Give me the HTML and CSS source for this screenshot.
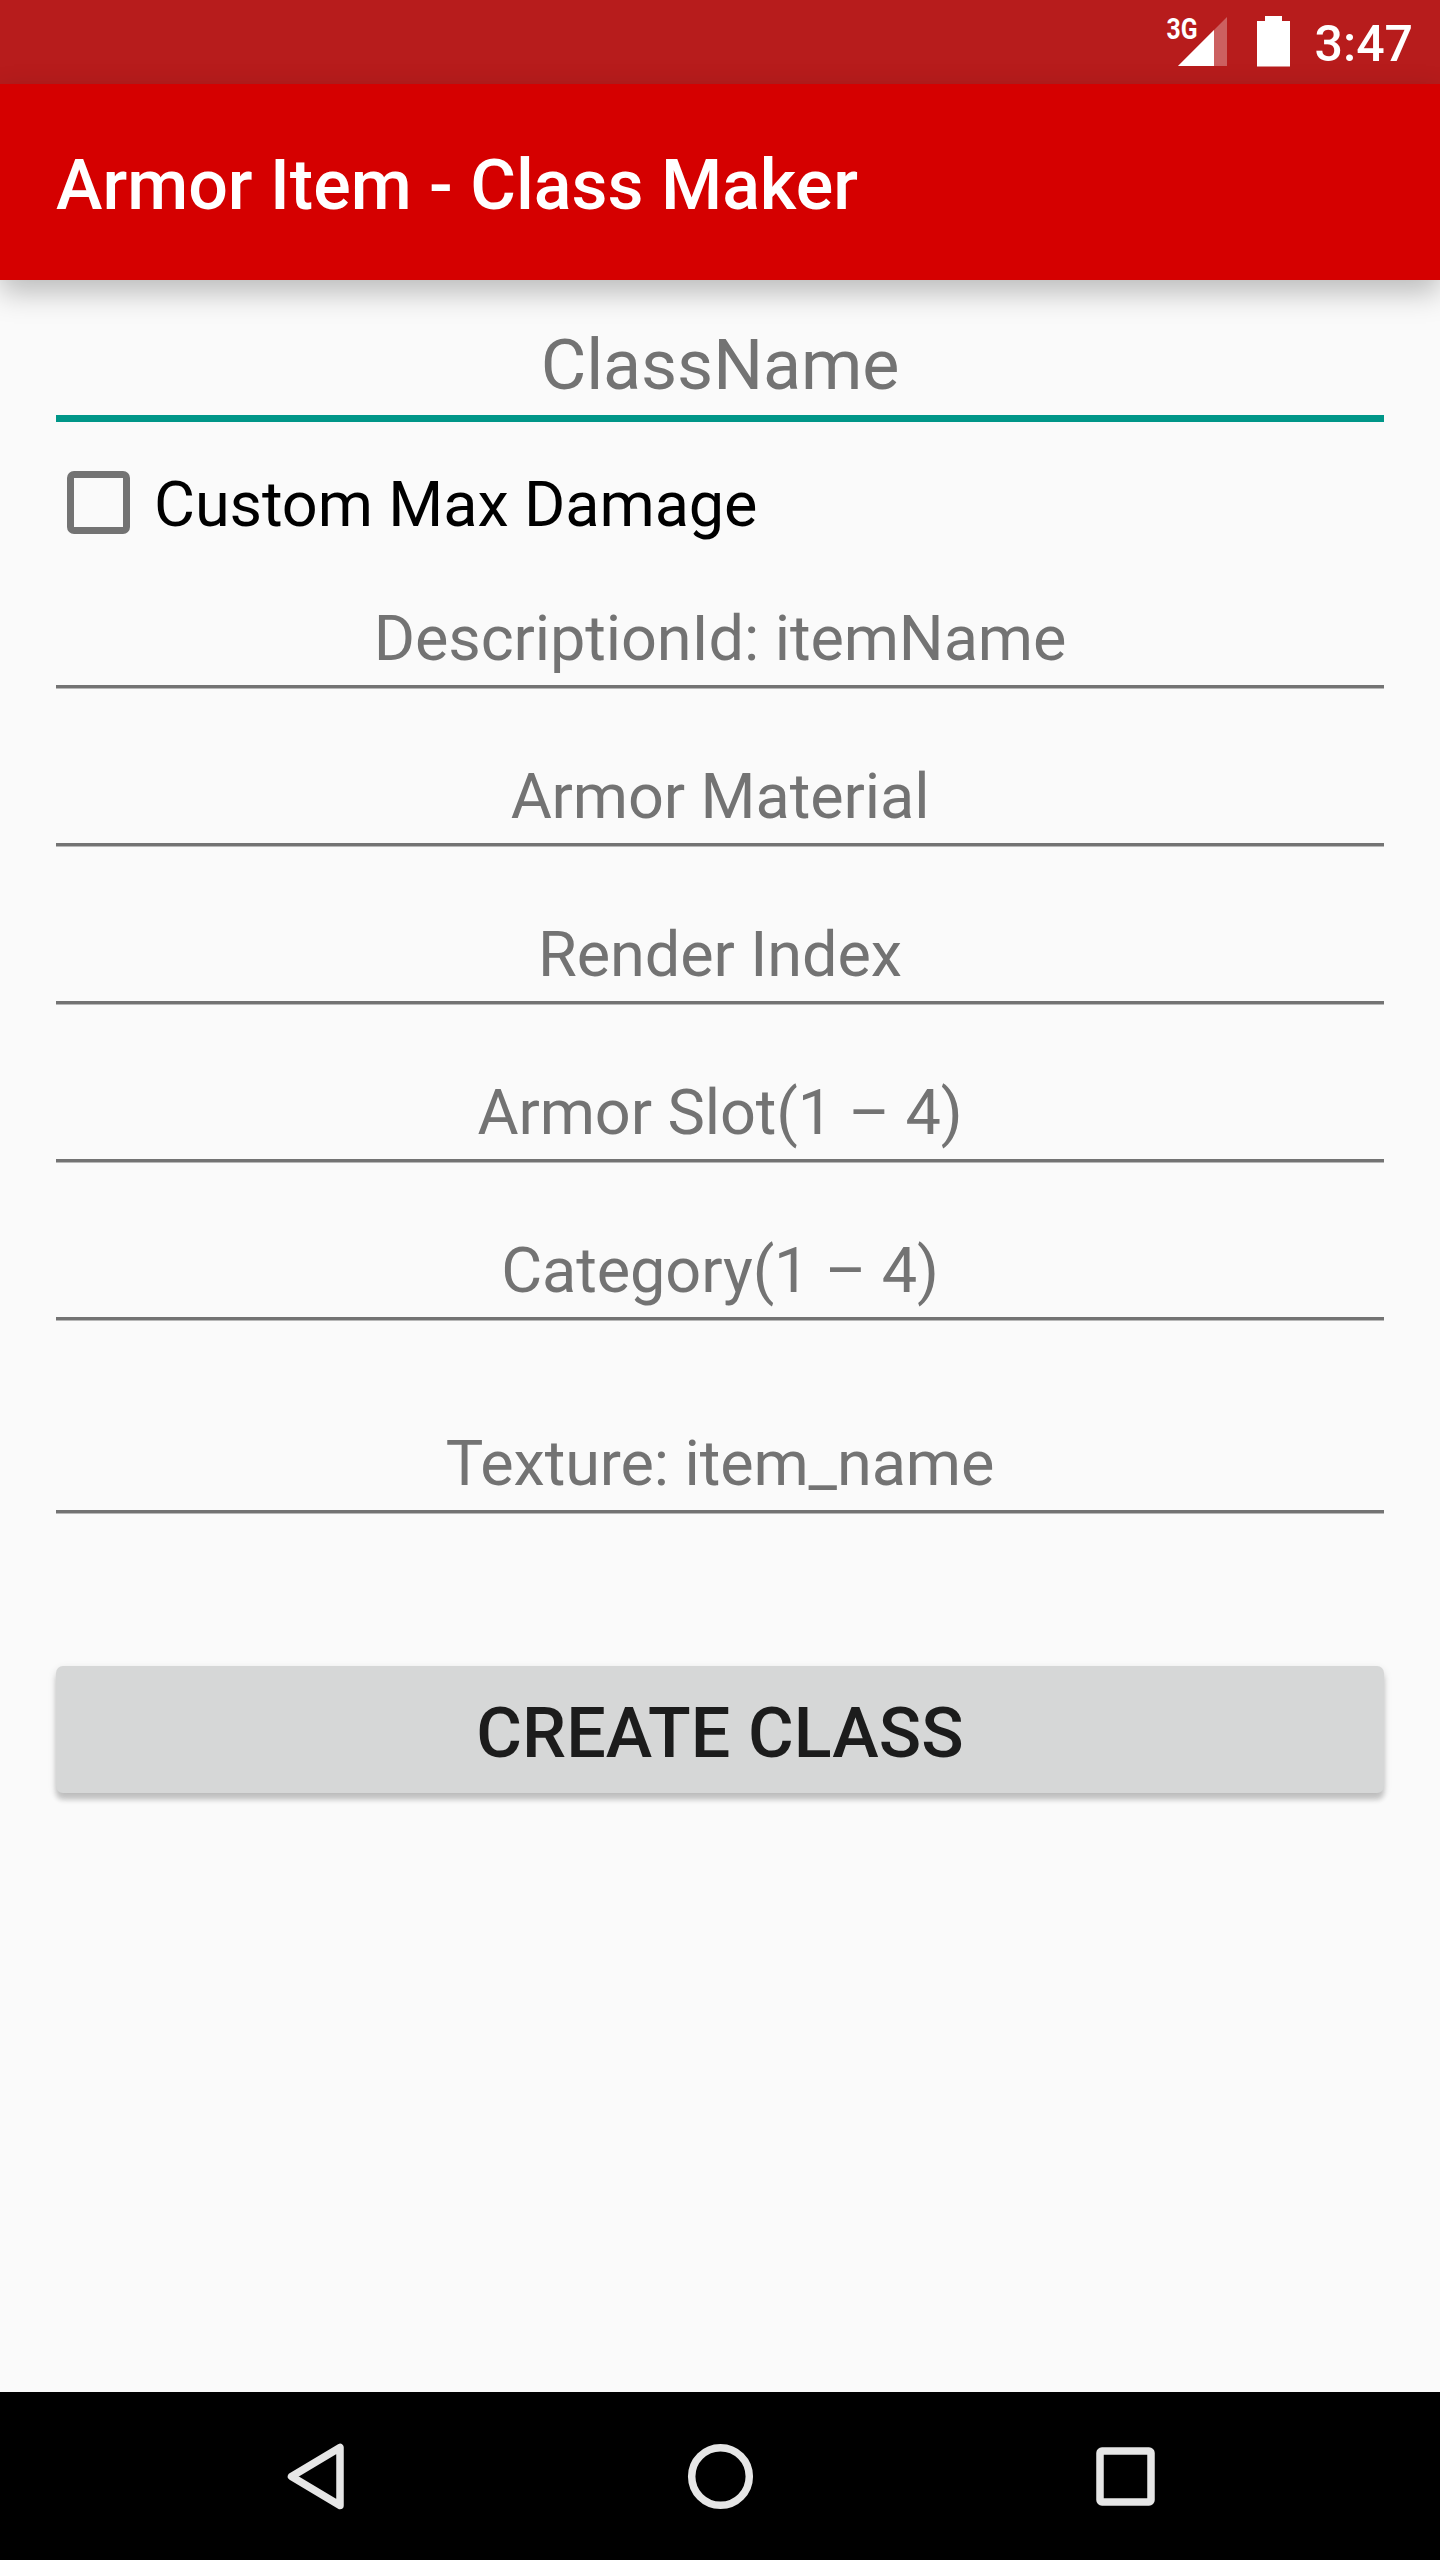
FILE: index.html
```html
<!DOCTYPE html>
<html lang="en">
<head>
    <meta charset="UTF-8">
    <meta name="viewport" content="width=device-width, initial-scale=1.0">
    <title>Armor Item - Class Maker</title>
    <link rel="stylesheet" href="styles.css">
</head>
<body>
    <div class="status-bar">
        <svg class="signal" width="62" height="84" viewBox="0 0 62 84">
            <text class="network" x="0.5" y="39" textLength="31" lengthAdjust="spacingAndGlyphs">3G</text>
            <path d="M12 66 L61 17 V66 Z" fill="#fff" fill-opacity="0.3"/>
            <path d="M12 66 L48 30 V66 Z" fill="#fff"/>
        </svg>
        <svg class="battery" width="33" height="84" viewBox="0 0 33 84">
            <path d="M8 16 H25 V21 H33 V66.5 H0 V21 H8 Z" fill="#fff"/>
        </svg>
        <span class="clock">3:47</span>
    </div>
    <header>
        <h1>Armor Item - Class Maker</h1>
    </header>
    <main>
        <form id="armorForm">
            <input type="text" class="field active" id="className" placeholder="ClassName">
            <label class="check-row">
                <input type="checkbox" id="maxDamage">
                <span>Custom Max Damage</span>
            </label>
            <input type="text" class="field" id="descriptionId" placeholder="DescriptionId: itemName">
            <input type="text" class="field" id="material" placeholder="Armor Material">
            <input type="text" class="field" id="renderIndex" placeholder="Render Index">
            <input type="text" class="field" id="slot" placeholder="Armor Slot(1 – 4)">
            <input type="text" class="field" id="category" placeholder="Category(1 – 4)">
            <input type="text" class="field texture" id="texture" placeholder="Texture: item_name">
            <button type="button">Create Class</button>
        </form>
    </main>
    <nav>
        <svg width="70" height="70" viewBox="0 0 70 70">
            <path d="M60 6.5 V64.5 L11.5 35.5 Z"/>
        </svg>
        <svg width="70" height="70" viewBox="0 0 70 70">
            <circle cx="35.5" cy="35.5" r="28.8"/>
        </svg>
        <svg width="70" height="70" viewBox="0 0 70 70">
            <rect x="10" y="10" width="51" height="51" rx="2"/>
        </svg>
    </nav>
</body>
</html>
```
FILE: styles.css
```css
* {
    box-sizing: border-box;
}
body {
    font-family: Roboto, sans-serif;
    margin: 0;
    height: 2560px;
    display: flex;
    flex-direction: column;
    background-color: #fafafa;
    color: #000;
}
.status-bar {
    height: 84px;
    padding-right: 27px;
    display: flex;
    justify-content: flex-end;
    background-color: #b71c1c;
    color: white;
}
.network {
    font-size: 30px;
    font-weight: bold;
    fill: white;
}
.battery {
    margin-left: 29px;
}
.clock {
    margin-left: 25px;
    font-size: 50px;
    font-weight: 500;
    line-height: 88px;
}
header {
    height: 196px;
    padding-left: 56px;
    background-color: #d50000;
    color: white;
    box-shadow: 0 12px 28px rgba(0, 0, 0, 0.26);
}
h1 {
    margin: 0;
    font-size: 70px;
    font-weight: 500;
    line-height: 202px;
}
main {
    flex: 1;
    padding: 35px 56px;
}
form {
    display: flex;
    flex-direction: column;
}
.field {
    width: 100%;
    height: 96px;
    margin: 0 0 62px;
    padding: 0;
    border: none;
    border-bottom: 3px solid #737373;
    box-shadow: 0 1px 0 #b8b8b8;
    background: none;
    outline: none;
    font-family: inherit;
    font-size: 63px;
    letter-spacing: -0.1px;
    text-align: center;
}
.field::placeholder {
    color: #737373;
    opacity: 1;
}
.field.active {
    height: 107px;
    margin-bottom: 0;
    border-bottom: 7px solid #009688;
    box-shadow: none;
    font-size: 70px;
}
.field.texture {
    margin-top: 35px;
    margin-bottom: 153px;
}
.check-row {
    display: flex;
    align-items: center;
    height: 165px;
    margin-bottom: 5px;
    padding-left: 10px;
    font-size: 63px;
    letter-spacing: -0.1px;
}
.check-row input {
    appearance: none;
    width: 63px;
    height: 63px;
    margin: 0 24px 4px 1px;
    border: 7px solid #737373;
    border-radius: 7px;
}
button {
    height: 127px;
    padding: 6px 0 0;
    border: none;
    border-radius: 7px;
    background-color: #d6d7d7;
    box-shadow: 0 7px 5px rgba(0, 0, 0, 0.17), 0 3px 8px rgba(0, 0, 0, 0.12);
    color: #1c1c1c;
    font-family: inherit;
    font-size: 70px;
    font-weight: 500;
    letter-spacing: 0.1px;
    text-transform: uppercase;
}
nav {
    height: 168px;
    padding: 0 280px;
    display: flex;
    align-items: center;
    justify-content: space-between;
    background-color: #000;
}
nav svg {
    fill: none;
    stroke: #e6e6e6;
    stroke-width: 7.5;
    stroke-linejoin: round;
}
```
